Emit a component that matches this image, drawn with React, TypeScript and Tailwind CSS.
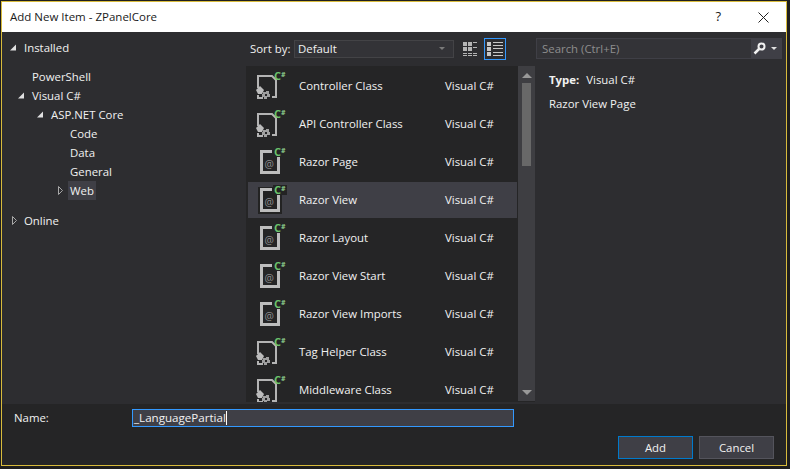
import React from "react";

const items: [string, "class" | "razor"][] = [
  ["Controller Class", "class"],
  ["API Controller Class", "class"],
  ["Razor Page", "razor"],
  ["Razor View", "razor"],
  ["Razor Layout", "razor"],
  ["Razor View Start", "razor"],
  ["Razor View Imports", "razor"],
  ["Tag Helper Class", "class"],
  ["Middleware Class", "class"],
];

function Badge({ selected }: { selected: boolean }) {
  return (
    <span className={`absolute left-[25px] top-[3px] flex h-[10px] items-start pl-[1px] pr-[1px] font-bold leading-[10px] text-[#6cc36c] ${selected ? "bg-[#232323]" : ""}`}>
      <span className="text-[11px] leading-[10px]">C</span>
      <span className="text-[7px] leading-[7px] text-[#8fd08f]">#</span>
    </span>
  );
}

function ClassIcon() {
  return (
    <svg width="24" height="26" viewBox="0 0 24 26" className="absolute left-[8px] top-[7px]" fill="none">
      <path d="M2 13V1H16L20 5V22H16" stroke="#b4b4b4" strokeWidth="2" />
      <path d="M2 20V23H7" stroke="#b4b4b4" strokeWidth="2" />
      <path d="M0 15L4 11L8 15L6 19H2z" fill="#bcbcbc" />
      <path d="M7 17h3v-1h3v3h1v3h-3v2H8v-2H6v-3h1z" fill="#a0a0a0" />
      <path d="M9 19h2v2H9z" fill="#252526" />
    </svg>
  );
}

function RazorIcon({ selected }: { selected: boolean }) {
  return (
    <>
      <svg width="24" height="28" viewBox="0 0 24 28" className="absolute left-[10px] top-[4px]" fill="none">
        {selected && <rect x="0" y="1" width="24" height="27" fill="#232323" />}
        <path d="M14 3.5H3.5V24.500H20.500V9" stroke="#bdbdbd" strokeWidth="3" />
      </svg>
      <span className="absolute left-[16.5px] top-[14px] text-[10.5px] leading-[12px] text-[#8e8e8e]">@</span>
    </>
  );
}

function Arrow({ open, className }: { open: boolean; className: string }) {
  return open ? (
    <svg width="7" height="7" viewBox="0 0 7 7" className={`mr-[5px] ${className}`}>
      <path d="M6 0.5V6.5H0z" fill="#e0e0e0" />
    </svg>
  ) : (
    <svg width="6" height="9" viewBox="0 0 6 9" className={`mr-[4px] ${className}`} fill="none">
      <path d="M0.5 0.5L4.500 4.500L0.5 8.500z" stroke="#a8a8a8" />
    </svg>
  );
}

function TreeRow({ label, pad, arrow, selected }: { label: string; pad: string; arrow?: boolean; selected?: boolean }) {
  return (
    <div className={`flex h-[19px] items-center ${pad}`}>
      {arrow !== undefined && <Arrow open={arrow} className="shrink-0" />}
      <span className={selected ? "bg-[#3f3f46] px-[2px] leading-[19px]" : "px-[2px] leading-[19px]"}>{label}</span>
    </div>
  );
}

export default function App() {
  return (
    <div
      className="h-[469px] w-[790px] overflow-hidden bg-[#1e1e1e] pl-[1px] pt-[1px] text-[11.4px] text-[#f1f1f1]"
      style={{ fontFamily: '"Open Sans", "Noto Sans", sans-serif' }}
    >
      <div className="flex h-[465px] w-[786px] flex-col border border-[#d8bb3c] bg-[#2d2d30]">
        <div className="flex h-[30px] shrink-0 items-center justify-between bg-white pl-[8px] text-[11.5px] text-[#1a1a1a]">
          <span>Add New Item - ZPanelCore</span>
          <div className="flex items-center">
            <span className="mr-[37px] text-[13px]">?</span>
            <svg width="11" height="11" viewBox="0 0 11 11" className="mr-[17px]" stroke="#222" fill="none">
              <path d="M0.5 0.5L10.500 10.500M10.500 0.5L0.5 10.500" />
            </svg>
          </div>
        </div>
        <div className="flex min-h-0 flex-1">
          <div className="flex w-[244px] shrink-0 flex-col pt-[6px]">
            <TreeRow label="Installed" pad="pl-[8px]" arrow={true} />
            <div className="h-[10px]" />
            <TreeRow label="PowerShell" pad="pl-[28px]" />
            <TreeRow label="Visual C#" pad="pl-[16px]" arrow={true} />
            <TreeRow label="ASP.NET Core" pad="pl-[35px]" arrow={true} />
            <TreeRow label="Code" pad="pl-[66px]" />
            <TreeRow label="Data" pad="pl-[66px]" />
            <TreeRow label="General" pad="pl-[66px]" />
            <TreeRow label="Web" pad="pl-[56px]" arrow={false} selected />
            <div className="h-[11px]" />
            <TreeRow label="Online" pad="pl-[10px]" arrow={false} />
          </div>
          <div className="flex w-[289px] shrink-0 flex-col">
            <div className="flex h-[34px] shrink-0 items-center pb-[1px]">
              <span className="ml-[4px] w-[44px]">Sort by:</span>
              <div className="flex h-[18px] w-[160px] items-center justify-between border border-[#434346] bg-[#333337] pl-[3px] pr-[8px]">
                <span>Default</span>
                <span className="h-0 w-0 border-x-[3px] border-t-[3px] border-x-transparent border-t-[#7a7a7a]" />
              </div>
              <svg width="14" height="14" viewBox="0 0 14 14" className="ml-[9px]" fill="#b5b5b5">
                <path d="M0 0h4v4H0zM5 0h4v4H5zM10 0h4v1h-4zM0 5h4v4H0zM5 5h4v4H5zM10 5h4v1h-4zM0 11h4v1H0zM0 13h4v1H0zM5 11h4v1H5zM5 13h4v1H5zM10 11h4v1h-4zM10 13h4v1h-4z" />
              </svg>
              <div className="ml-[7px] flex h-[22px] w-[22px] items-center justify-center border border-[#3399ff]">
                <svg width="16" height="14" viewBox="0 0 16 14" fill="#c8c8c8">
                  <path d="M0 0h4v4H0zM6 0h10v1H6zM6 3h10v1H6zM0 5h4v4H0zM6 6h10v1H6zM0 10h4v4H0zM6 10h10v1H6zM6 13h10v1H6z" />
                </svg>
              </div>
            </div>
            <div className="flex h-[336px] overflow-hidden bg-[#252526]">
              <div className="min-w-0 flex-1 overflow-hidden pt-[1px]">
                {items.map(([name, kind]) => {
                  const selected = name === "Razor View";
                  return (
                    <div
                      key={name}
                      className={`relative ml-[2px] mr-[1px] flex h-[38px] items-center border-y border-[#252526] ${selected ? "bg-[#3f3f46]" : ""}`}
                    >
                      {kind === "class" ? <ClassIcon /> : <RazorIcon selected={selected} />}
                      <Badge selected={selected} />
                      <span className="ml-[51px] w-[146px] shrink-0">{name}</span>
                      <span>Visual C#</span>
                    </div>
                  );
                })}
              </div>
              <div className="flex h-[335px] w-[17px] shrink-0 flex-col items-center bg-[#3e3e42] pt-[7px]">
                <span className="h-0 w-0 border-x-[5px] border-b-[5px] border-x-transparent border-b-[#999999]" />
                <div className="mt-[5px] h-[83px] w-[9px] bg-[#686868]" />
                <span className="mb-[6px] mt-auto h-0 w-0 border-x-[5px] border-t-[5px] border-x-transparent border-t-[#999999]" />
              </div>
            </div>
          </div>
          <div className="flex min-w-0 flex-1 flex-col pl-[1px]">
            <div className="mt-[6px] flex h-[21px] w-[246px] items-center justify-between border border-[#3f3f46] bg-[#333337] pl-[5px] text-[#8e8e8e]">
              <span>Search (Ctrl+E)</span>
              <div className="flex h-full w-[30px] items-center bg-[#3f3f46] pl-[2px]">
                <svg width="13" height="13" viewBox="0 0 13 13" fill="none" stroke="#f1f1f1">
                  <circle cx="8.500" cy="4.500" r="3" strokeWidth="2" />
                  <path d="M6 7L1.500 11.500" strokeWidth="2.500" />
                </svg>
                <span className="ml-[5px] h-0 w-0 border-x-[3px] border-t-[3px] border-x-transparent border-t-[#e0e0e0]" />
              </div>
            </div>
            <div className="mt-[9px] pl-[13px] leading-[24px]">
              <div>
                <span className="mr-[7px] font-bold">Type:</span>Visual C#
              </div>
              <div>Razor View Page</div>
            </div>
          </div>
        </div>
        <div className="flex h-[61px] shrink-0 flex-col bg-[#252526] pt-[5px]">
          <div className="flex h-[18px] items-center">
            <span className="ml-[12px] w-[118px]">Name:</span>
            <div className="flex h-[18px] w-[382px] items-center border border-[#3399ff] bg-[#3f3f46] pl-[1px] text-[11.6px]">
              <span>_LanguagePartial</span>
              <span className="h-[14px] w-[1px] bg-white" />
            </div>
          </div>
          <div className="mt-[9px] flex justify-end gap-[6px] pr-[12px]">
            <div className="flex h-[23px] w-[75px] items-center justify-center border border-[#007acc] bg-[#3f3f46]">Add</div>
            <div className="flex h-[23px] w-[75px] items-center justify-center border border-[#54545c] bg-[#3f3f46]">Cancel</div>
          </div>
        </div>
      </div>
    </div>
  );
}
